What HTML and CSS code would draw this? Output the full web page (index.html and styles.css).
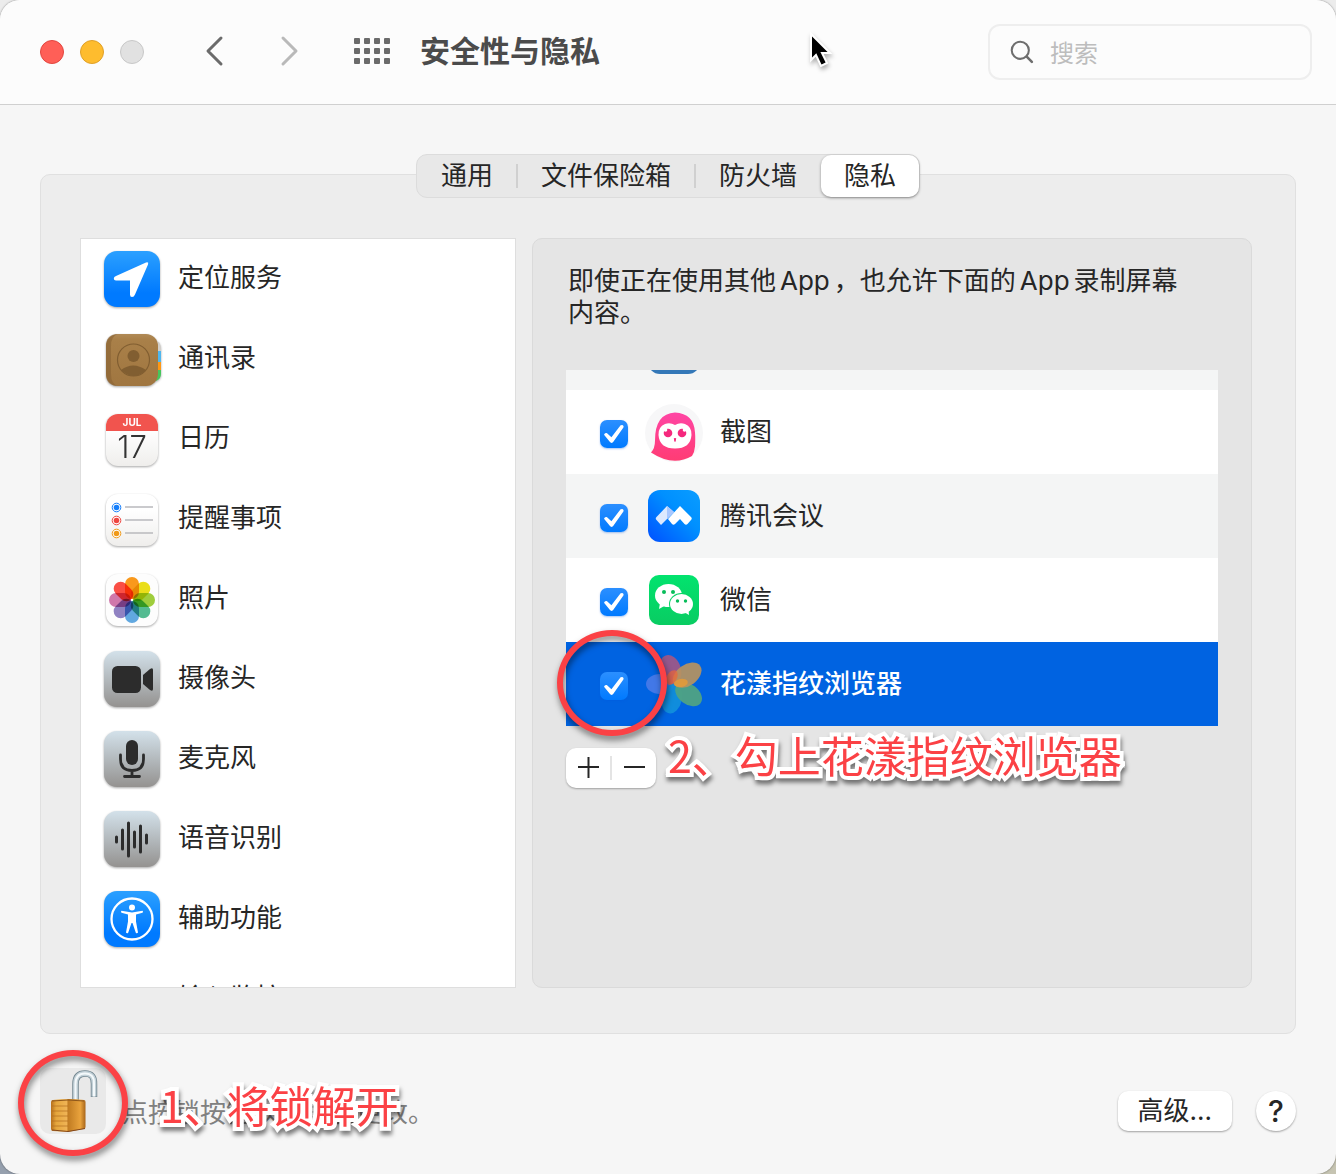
FILE: index.html
```
<!DOCTYPE html>
<html lang="zh-CN">

    <head>
        <meta charset="UTF-8">
        <meta name="viewport" content="width=device-width, initial-scale=1.0">
        <title>安全性与隐私</title>
        <link rel="stylesheet" href="styles.css">
    </head>

    <body>
        <div class="window">
            <header class="toolbar">
                <div class="lights">
                    <button class="light red" aria-label="关闭"></button>
                    <button class="light yellow" aria-label="最小化"></button>
                    <button class="light" aria-label="缩放"></button>
                </div>
                <nav class="nav">
                    <button class="plain" aria-label="后退">
                        <svg width="30" height="32" viewBox="0 0 30 32"><path d="M22 3 9 16 22 29" fill="none" stroke="#6b6b6b" stroke-width="3" stroke-linecap="round" stroke-linejoin="round"/></svg>
                    </button>
                    <button class="plain" aria-label="前进">
                        <svg width="30" height="32" viewBox="0 0 30 32"><path d="M8 3 21 16 8 29" fill="none" stroke="#b9b9b9" stroke-width="3" stroke-linecap="round" stroke-linejoin="round"/></svg>
                    </button>
                </nav>
                <button class="plain show-all" aria-label="显示全部">
                    <svg width="36" height="26" viewBox="0 0 36 26" fill="#6b6b6b">
                        <g id="dots"><rect width="6" height="6" rx="1"/><rect x="10" width="6" height="6" rx="1"/><rect x="20" width="6" height="6" rx="1"/><rect x="30" width="6" height="6" rx="1"/></g>
                        <use href="#dots" y="10"/>
                        <use href="#dots" y="20"/>
                    </svg>
                </button>
                <h1>安全性与隐私</h1>
                <label class="search">
                    <svg width="28" height="28" viewBox="0 0 28 28" fill="none" stroke="#6e6e6e" stroke-linecap="round"><circle cx="12" cy="12" r="10" stroke-width="2.400"/><path d="m19.500 19.500 6 6" stroke-width="3"/></svg>
                    <input type="text" placeholder="搜索" aria-label="搜索">
                </label>
                <svg class="cursor" width="28" height="40" viewBox="0 0 28 40"><path d="M4 3v26l5-5 5 11 6-3-5-10h8z" fill="#000" stroke="#fff" stroke-width="2"/></svg>
            </header>

            <main>
                <div class="tabs">
                    <button class="tab">通用</button>
                    <button class="tab">文件保险箱</button>
                    <button class="tab">防火墙</button>
                    <button class="tab active">隐私</button>
                </div>

                <section class="panel">
                    <ul class="services">
                        <li>
                            <svg class="icon" viewBox="0 0 56 56">
                                <defs><linearGradient id="blue" x2="0" y2="1"><stop stop-color="#2ba0ff"/><stop offset=".75" stop-color="#007aff"/></linearGradient></defs>
                                <rect width="56" height="56" rx="13" fill="url(#blue)"/>
                                <path d="M42 11.500q3-1 2 2L31 43.500q-1 2.500-3 2.500-2 0-2-2.500V29.500H12q-2.200 0-2.200-2 0-1.700 2.200-2.500z" fill="#fff"/>
                            </svg>
                            <span>定位服务</span>
                        </li>
                        <li>
                            <svg class="icon" viewBox="0 0 56 56">
                                <defs><linearGradient id="brown" x2="0" y2="1"><stop stop-color="#b08a56"/><stop offset=".1" stop-color="#a98049"/><stop offset="1" stop-color="#a07640"/></linearGradient></defs>
                                <path d="M48 10h5q4 2 4 8v6h-9z" fill="#d2cfc9"/><path d="M48 20h9v11h-9z" fill="#4fb7ee"/><path d="M48 31h9v8h-9z" fill="#ff9713"/><path d="M48 39h9v4q0 5-5 7h-4z" fill="#46c65b"/>
                                <rect x="2" y="3" width="52" height="52" rx="12" fill="url(#brown)"/>
                                <path d="M14 3q-12 0-12 12v28q0 12 12 12-7-2-7-12V15Q7 5 14 3z" fill="#896334" opacity=".6"/>
                                <circle cx="29.500" cy="29" r="16" fill="none" stroke="#815e31" stroke-width="1.200"/>
                                <circle cx="29.500" cy="25" r="6" fill="#815e31"/><path d="M17 39q12-9 25 0-12 12-25 0z" fill="#815e31"/>
                            </svg>
                            <span>通讯录</span>
                        </li>
                        <li>
                            <svg class="icon" viewBox="0 0 56 56">
                                <defs>
                                    <linearGradient id="paper" x2="0" y2="1"><stop offset=".3" stop-color="#fff"/><stop offset="1" stop-color="#efeeec"/></linearGradient>
                                    <clipPath id="tile"><rect x="2" y="3" width="52" height="52" rx="12"/></clipPath>
                                </defs>
                                <rect x="2" y="3" width="52" height="52" rx="12" fill="url(#paper)"/>
                                <path d="M0 0h56v20H0z" fill="#f1544e" clip-path="url(#tile)"/>
                                <text class="cal-month" x="28" y="15">JUL</text>
                                <text class="cal-day" x="28" y="47">17</text>
                            </svg>
                            <span>日历</span>
                        </li>
                        <li>
                            <svg class="icon" viewBox="0 0 56 56">
                                <rect x="2" y="3" width="52" height="52" rx="12" fill="url(#paper)"/>
                                <g stroke="#b9b9bd" stroke-width="1.600"><path d="M21 16h28M21 29h28M21 42h28"/></g>
                                <g fill="#fff" stroke-width="1"><circle cx="12.500" cy="16.500" r="4.300" stroke="#147efb"/><circle cx="12.500" cy="29.500" r="4.300" stroke="#ee4540"/><circle cx="12.500" cy="42.500" r="4.300" stroke="#f09a1a"/></g>
                                <circle cx="12.500" cy="16.500" r="2.800" fill="#147efb"/><circle cx="12.500" cy="29.500" r="2.800" fill="#ee4540"/><circle cx="12.500" cy="42.500" r="2.800" fill="#f09a1a"/>
                            </svg>
                            <span>提醒事项</span>
                        </li>
                        <li>
                            <svg class="icon photos" viewBox="0 0 56 56">
                                <rect x="2" y="3" width="52" height="52" rx="12" fill="#fdfdfd"/>
                                <g transform="translate(28 29)">
                                    <rect class="petal" fill="#fb9a1c"/>
                                    <rect class="petal" fill="#ece01a" transform="rotate(45)"/>
                                    <rect class="petal" fill="#a0cf3c" transform="rotate(90)"/>
                                    <rect class="petal" fill="#54bd92" transform="rotate(135)"/>
                                    <rect class="petal" fill="#62a9e2" transform="rotate(180)"/>
                                    <rect class="petal" fill="#9183c4" transform="rotate(225)"/>
                                    <rect class="petal" fill="#d279ad" transform="rotate(270)"/>
                                    <rect class="petal" fill="#fc4f45" transform="rotate(315)"/>
                                    <circle r="1" fill="#fff"/>
                                </g>
                            </svg>
                            <span>照片</span>
                        </li>
                        <li>
                            <svg class="icon" viewBox="0 0 56 56">
                                <defs><linearGradient id="grey" x2="0" y2="1"><stop stop-color="#d3e1ea"/><stop offset="1" stop-color="#949290"/></linearGradient></defs>
                                <rect width="56" height="56" rx="13" fill="url(#grey)"/>
                                <rect x="8" y="15" width="29" height="27" rx="5.500" fill="#2c2c2c"/><path d="m39 24 7-6q3-2 3 1v19q0 3-3 1l-7-6z" fill="#2c2c2c"/>
                            </svg>
                            <span>摄像头</span>
                        </li>
                        <li>
                            <svg class="icon" viewBox="0 0 56 56">
                                <rect width="56" height="56" rx="13" fill="url(#grey)"/>
                                <rect x="22" y="9" width="12" height="25" rx="6" fill="#2c2c2c"/>
                                <path d="M16.500 24v4q0 11.500 11.500 11.500T39.500 28v-4M28 40v5M20.500 45.500h15" fill="none" stroke="#2c2c2c" stroke-width="2.800" stroke-linecap="round"/>
                            </svg>
                            <span>麦克风</span>
                        </li>
                        <li>
                            <svg class="icon" viewBox="0 0 56 56">
                                <rect width="56" height="56" rx="13" fill="url(#grey)"/>
                                <path d="M12.500 26v5M18.500 19v19M24.500 12v33M30.500 21v15M36.500 15v26M42.500 24v8" stroke="#2c2c2c" stroke-width="3" stroke-linecap="round"/>
                            </svg>
                            <span>语音识别</span>
                        </li>
                        <li>
                            <svg class="icon" viewBox="0 0 56 56">
                                <rect width="56" height="56" rx="13" fill="url(#blue)"/>
                                <circle cx="28" cy="28" r="20.500" fill="none" stroke="#fff" stroke-width="2.300"/>
                                <circle cx="28" cy="16.500" r="3" fill="#fff"/>
                                <path d="M17.500 19.800 28 21.500l10.500-1.700q1.200.8 0 2L32 23.500v7l2 11q-1 1.300-2.200.2L28.500 32h-1l-3.300 9.700q-1.200 1.100-2.200-.2l2-11v-7l-6.500-1.700q-1.200-1.200 0-2z" fill="#fff"/>
                            </svg>
                            <span>辅助功能</span>
                        </li>
                        <li>
                            <svg class="icon" viewBox="0 0 56 56"></svg>
                            <span>输入监控</span>
                        </li>
                    </ul>

                    <div class="detail">
                        <p class="desc">即使正在使用其他<span class="latin">App</span>，也允许下面的<span class="latin">App</span>录制屏幕内容。</p>
                        <div class="apps-wrap">
                            <ul class="apps">
                                <li class="alt">
                                    <input type="checkbox" id="app0" checked>
                                    <label for="app0"><svg viewBox="0 0 60 60"><rect x="4" y="4" width="52" height="52" rx="12" fill="#3478b8"/></svg></label>
                                </li>
                                <li>
                                    <input type="checkbox" id="app1" checked>
                                    <label for="app1">
                                        <svg viewBox="0 0 60 60">
                                            <defs><linearGradient id="pink" x2="0" y2="1"><stop stop-color="#ff45a4"/><stop offset="1" stop-color="#ff3c74"/></linearGradient></defs>
                                            <circle cx="30" cy="31" r="29" fill="#f7f7f8"/>
                                            <path d="M31 10.500q19 1 20 20 .5 6 0 14-.500 6-3 9.500-19 11-41-3.500 4-4 4-12 0-27 20-28z" fill="url(#pink)"/>
                                            <path d="M31 23q5-3 10-1 7 3 6.500 11-1 13.500-16.500 13.500T14.500 33Q14 25 21 22q5-2 10 1z" fill="#fff"/>
                                            <circle cx="24" cy="31" r="4.300" fill="#f5287d"/><circle cx="38" cy="31" r="4.300" fill="#f5287d"/><circle cx="21.500" cy="28" r="1.800" fill="#fff"/><circle cx="40.500" cy="28" r="1.800" fill="#fff"/><path d="M30.300 36.500h1.400l-.700 3z" stroke="#f5287d" stroke-linejoin="round" fill="#f5287d"/>
                                        </svg>
                                        截图
                                    </label>
                                </li>
                                <li class="alt">
                                    <input type="checkbox" id="app2" checked>
                                    <label for="app2">
                                        <svg viewBox="0 0 60 60">
                                            <defs><linearGradient id="meet" x1="1" y1="0" x2="0" y2="1"><stop stop-color="#0a9dff"/><stop offset=".4" stop-color="#0090ff"/><stop offset="1" stop-color="#0050ff"/></linearGradient></defs>
                                            <rect x="4" y="4" width="52" height="52" rx="12" fill="url(#meet)"/>
                                            <path d="M12.500 31 23 20l7 6-5 5-8 8-4.500-5q-1.500-1.500 0-3z" fill="#dce9ff"/>
                                            <path d="m23 20 7 6-7 7z" fill="#a9c8ff"/>
                                            <path d="M24 33 36 20l11 11q1.500 1.500 0 3l-3.500 4q-1.500 1.500-3 0L36 33l-5 5q-1.500 1.500-3 0z" fill="#fff"/>
                                        </svg>
                                        腾讯会议
                                    </label>
                                </li>
                                <li>
                                    <input type="checkbox" id="app3" checked>
                                    <label for="app3">
                                        <svg viewBox="0 0 60 60">
                                            <defs><linearGradient id="chat" x2="0" y2="1"><stop stop-color="#02e36e"/><stop offset="1" stop-color="#09cc62"/></linearGradient></defs>
                                            <rect x="5" y="5" width="50" height="50" rx="10" fill="url(#chat)"/>
                                            <path d="m16 33-1 6 7-4z" fill="#fff"/><ellipse cx="24.500" cy="25.500" rx="13.500" ry="11.500" fill="#fff"/>
                                            <circle cx="20" cy="22" r="2" fill="#08bd5a"/><circle cx="29" cy="22" r="2" fill="#08bd5a"/>
                                            <ellipse cx="37.500" cy="34" rx="12.500" ry="11" fill="#07d466"/><ellipse cx="37.500" cy="34" rx="11.500" ry="10" fill="#fff"/><path d="m40 42 5 3-.500-5z" fill="#fff"/>
                                            <circle cx="33.500" cy="31" r="1.700" fill="#08bd5a"/><circle cx="41.500" cy="31" r="1.700" fill="#08bd5a"/>
                                        </svg>
                                        微信
                                    </label>
                                </li>
                                <li class="selected">
                                    <input type="checkbox" id="app4" checked>
                                    <label for="app4">
                                        <svg viewBox="0 0 60 60">
                                            <g transform="translate(31 30)">
                                                <ellipse cx="-15" cy="0" rx="14" ry="10" fill="#527de8" opacity=".8"/>
                                                <ellipse cx="15" rx="15" ry="10.500" fill="#a45684" opacity=".9" transform="rotate(-108)"/>
                                                <ellipse cx="15" rx="15" ry="10" fill="#1291dc" opacity=".9" transform="rotate(102)"/>
                                                <ellipse cx="17" rx="15" ry="10" fill="#4fa283" opacity=".95" transform="rotate(37)"/>
                                                <ellipse cx="15" rx="16" ry="10.500" fill="#b69260" opacity=".92" transform="rotate(-36)"/>
                                                <ellipse cx="4" cy="-6" rx="8" ry="5" fill="#ed6638" opacity=".7" transform="rotate(-60)"/>
                                                <ellipse cx="6" cy="0" rx="7" ry="4" fill="#f19c2d" opacity=".7" transform="rotate(-10)"/>
                                            </g>
                                        </svg>
                                        花漾指纹浏览器
                                    </label>
                                </li>
                            </ul>
                            <div class="ring ring-check"></div>
                        </div>
                        <div class="edit-row">
                            <div class="segmented">
                                <button aria-label="添加"><svg width="22" height="22" viewBox="0 0 22 22"><path d="M1 10h21M11.500 0v21" stroke="#262626" stroke-width="2"/></svg></button>
                                <button aria-label="移除"><svg width="22" height="22" viewBox="0 0 22 22"><path d="M1 10h21" stroke="#262626" stroke-width="2"/></svg></button>
                            </div>
                            <strong class="note note-check">2、勾上花漾指纹浏览器</strong>
                        </div>
                    </div>
                </section>
            </main>

            <footer class="bottom">
                <div class="lock-area">
                    <button class="lock" aria-label="锁">
                        <svg width="66" height="66" viewBox="0 0 66 66">
                            <defs>
                                <linearGradient id="gold"><stop stop-color="#b7701c"/><stop offset=".15" stop-color="#e5a63c"/><stop offset=".45" stop-color="#efb355"/><stop offset=".5" stop-color="#c17c22"/><stop offset=".85" stop-color="#e9a33d"/><stop offset="1" stop-color="#a8651a"/></linearGradient>
                            </defs>
                            <path d="M35.500 34V16q0-10.500 9.500-10.500T54 16v13" fill="none" stroke="#71858f" stroke-width="6.500"/>
                            <path d="M35.500 34V16q0-10.500 9.500-10.500T54 16v12.500" fill="none" stroke="#c3d1d8" stroke-width="4.800"/>
                            <path d="M35.500 34V16q0-10.500 9.500-10.500T54 16v12.500" fill="none" stroke="#f4f9fb" stroke-width="2"/>
                            <path d="M13 32q16-2 31 0 1.500 0 1.500 2v25q0 2-2 2l-16 3-14.500-1q-2 0-2-2V34q0-2 2-2z" fill="url(#gold)"/>
                            <path d="M12 38h16M12 43h16M12 48h16M12 53h16M12 58h16" stroke="#b16d1f" stroke-width="1" opacity=".7"/>
                            <path d="M12 33q16-2 32 0" fill="none" stroke="#8d561b"/>
                            <path d="m12 62 16 1.500 17-3" fill="none" stroke="#84481c" stroke-width="1.200"/>
                        </svg>
                    </button>
                    <span class="lock-text">点按锁按钮以防再次更改。</span>
                    <div class="ring ring-lock"></div>
                    <strong class="note note-lock">1、将锁解开</strong>
                </div>
                <div class="actions">
                    <button class="advanced">高级...</button>
                    <button class="help" aria-label="帮助">?</button>
                </div>
            </footer>
        </div>
    </body>

</html>
```
FILE: styles.css
```
* {
    box-sizing: border-box;
}

body {
    font-family: Inter, "Noto Sans CJK SC", sans-serif;
    font-size: 26px;
    line-height: 32px;
    color: #262626;
    margin: 0;
    background: linear-gradient(#ececec 50%, transparent 50%), linear-gradient(to right, #96a0ae, #c6c4b2);
}

ul, p, h1 {
    margin: 0;
    padding: 0;
    list-style: none;
}

button {
    font: inherit;
    color: inherit;
    padding: 0;
    border: none;
    background: none;
}

svg {
    display: block;
}

.window {
    display: flex;
    flex-direction: column;
    min-height: 100vh;
    background: #f6f6f6;
    border-radius: 20px;
    box-shadow: 0 0 2px rgba(0, 0, 0, 0.5);
}

/* toolbar */
.toolbar {
    position: relative;
    display: flex;
    align-items: center;
    height: 105px;
    padding: 0 24px 0 40px;
    background: #fcfcfc;
    border-bottom: 1px solid #d0d0d0;
    border-radius: 20px 20px 0 0;
}

.lights {
    display: flex;
    gap: 16px;
}

.light {
    width: 24px;
    height: 24px;
    border: 1px solid #c8c8c8;
    border-radius: 50%;
    background: #e1e1e1;
}

.light.red {
    background: #ff5f57;
    border-color: #e2463f;
}

.light.yellow {
    background: #febc2e;
    border-color: #e0a028;
}

.plain {
    margin-bottom: 2px;
}

.nav {
    display: flex;
    gap: 46px;
    margin-left: 55px;
}

.show-all {
    margin-left: 49px;
}

h1 {
    margin: 0 0 2px 30px;
    font-size: 30px;
    font-weight: bold;
    color: #4b4b4b;
}

.search {
    display: flex;
    align-items: center;
    gap: 16px;
    width: 324px;
    height: 56px;
    margin-left: auto;
    padding: 0 20px;
    border: 2px solid #eeeeee;
    border-radius: 12px;
}

.search input {
    width: 100%;
    padding: 4px 0 0;
    border: none;
    outline: none;
    background: none;
    font: inherit;
    font-size: 24px;
}

.search input::placeholder {
    color: #bdbdbd;
}

.cursor {
    position: absolute;
    left: 807px;
    top: 31px;
    filter: drop-shadow(1px 3px 2px rgba(0, 0, 0, 0.3));
}

/* tabs */
main {
    flex: 1;
    display: flex;
    flex-direction: column;
    padding: 49px 40px 0;
}

.tabs {
    position: relative;
    display: flex;
    align-self: center;
    height: 44px;
    margin-bottom: -24px;
    border: 1px solid #dcdcdc;
    border-radius: 11px;
    background: #e8e8e8;
}

.tab {
    position: relative;
    padding: 0 24px;
    border-radius: 10px;
}

.tab + .tab:not(.active)::before {
    content: "";
    position: absolute;
    left: -1px;
    top: 9px;
    width: 2px;
    height: 24px;
    background: #d0d0d0;
}

.tab.active {
    padding: 0 23px;
    background: #fff;
    box-shadow: 0 1px 3px rgba(0, 0, 0, 0.4);
}

/* content */
.panel {
    flex: 1;
    display: flex;
    gap: 16px;
    padding: 63px 43px 45px 39px;
    border: 1px solid #e0e0e0;
    border-radius: 10px;
    background: #ededed;
}

.services {
    flex: 0 0 436px;
    height: 750px;
    overflow: hidden;
    border: 1px solid #dedede;
    background: #fff;
}

.services li {
    display: flex;
    align-items: center;
    gap: 18px;
    height: 80px;
    padding-left: 23px;
}

.services span {
    margin-bottom: 3px;
}

.icon {
    width: 56px;
    height: 56px;
    overflow: visible;
    filter: drop-shadow(0 1px 1px rgba(0, 0, 0, 0.35));
}

.cal-month {
    font: bold 10px Inter, sans-serif;
    fill: #fff;
    text-anchor: middle;
}

.cal-day {
    font: 300 31px Inter, sans-serif;
    fill: #333;
    text-anchor: middle;
}

.petal {
    x: -7px;
    y: -23px;
    width: 14px;
    height: 22px;
    rx: 7px;
    mix-blend-mode: multiply;
}

.detail {
    flex: 1;
    padding: 26px 33px 0;
    border: 1px solid #dadada;
    border-radius: 10px;
    background: #e5e5e5;
}

.desc {
    padding: 0 36px 0 2px;
}

.latin {
    margin: 0 4px;
}

.apps-wrap {
    position: relative;
    margin-top: 41px;
}

/* scrolled to the end, so the first row is cut off */
.apps {
    display: flex;
    flex-direction: column;
    justify-content: flex-end;
    height: 356px;
    overflow: hidden;
    background: #fff;
}

.apps li {
    flex: none;
    display: flex;
    align-items: center;
    height: 84px;
    padding-left: 34px;
}

.apps .alt {
    background: #f4f5f5;
}

.apps .selected {
    background: #0063e1;
    color: #fff;
    font-weight: 500;
}

.apps label {
    display: flex;
    align-items: center;
    gap: 16px;
}

.apps label svg {
    width: 60px;
    height: 60px;
}

input[type="checkbox"] {
    appearance: none;
    position: relative;
    width: 28px;
    height: 28px;
    margin: 4px 16px 0 0;
    border-radius: 7px;
    background: linear-gradient(#2b8fff, #007aff);
    box-shadow: 0 1px 2px rgba(0, 90, 220, 0.35);
}

input[type="checkbox"]:checked::before {
    content: "";
    position: absolute;
    inset: 5px 4px;
    background: #fff;
    clip-path: polygon(0 54%, 5% 46%, 14% 44%, 37% 68%, 83% 2%, 92% 0, 98% 6%, 97% 14%, 45% 96%, 38% 100%, 31% 96%);
}

.edit-row {
    position: relative;
    display: flex;
    margin-top: 22px;
}

.segmented {
    display: flex;
    width: 90px;
    height: 40px;
    border-radius: 10px;
    background: #fff;
    box-shadow: 0 1px 2px rgba(0, 0, 0, 0.3);
}

.segmented button {
    flex: 1;
    display: flex;
    align-items: center;
    justify-content: center;
}

.segmented button + button {
    margin: 8px 0;
    border-left: 2px solid #e4e4e4;
}

/* footer */
.bottom {
    display: flex;
    justify-content: space-between;
    align-items: center;
    height: 140px;
    padding: 0 40px 14px;
}

.lock-area {
    position: relative;
    display: flex;
    align-items: center;
    gap: 16px;
}

.lock {
    margin-top: 8px;
    border-radius: 10px;
    background: #e9e9e9;
}

.lock-text {
    margin-top: 32px;
    color: #808080;
}

.actions {
    display: flex;
    gap: 24px;
    margin-top: 28px;
}

.advanced {
    height: 40px;
    padding: 0 20px;
    border-radius: 10px;
    background: #fff;
    box-shadow: 0 1px 2px rgba(0, 0, 0, 0.35);
}

.help {
    width: 40px;
    height: 40px;
    border-radius: 50%;
    background: #fff;
    font-size: 30px;
    font-weight: 500;
    box-shadow: 0 1px 2px rgba(0, 0, 0, 0.35);
}

/* red marks over the window */
.ring {
    position: absolute;
    width: 110px;
    height: 106px;
    border: 6px solid #fb4145;
    border-radius: 50%;
    filter: drop-shadow(1px 4px 3px rgba(0, 0, 0, 0.5));
    pointer-events: none;
}

.ring-check {
    left: -9px;
    bottom: -10px;
}

.ring-lock {
    left: -22px;
    top: -10px;
}

.note {
    position: absolute;
    font-family: "Noto Sans CJK SC", sans-serif;
    font-size: 43px;
    font-weight: 400;
    line-height: 48px;
    white-space: nowrap;
    color: #fb4145;
    -webkit-text-stroke: 8px #fff;
    paint-order: stroke fill;
    stroke-linejoin: round;
    filter: drop-shadow(1px 4px 2px rgba(0, 0, 0, 0.5));
}

.note-check {
    left: 102px;
    top: -18px;
}

.note-lock {
    left: 120px;
    top: 20px;
}
```
